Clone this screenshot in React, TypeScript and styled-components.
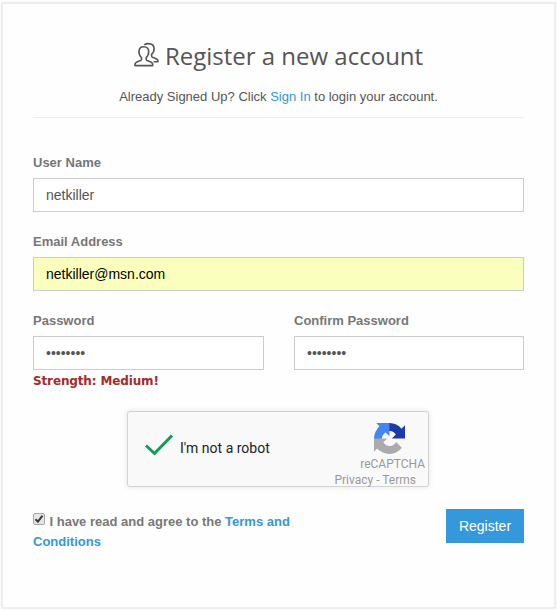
import React from "react";
import styled, { createGlobalStyle } from "styled-components";

const GlobalStyle = createGlobalStyle`
  * { box-sizing: border-box; }
  body {
    margin: 0;
    background: #fff;
    color: #555;
    font: 13px/20px "Liberation Sans", Arial, sans-serif;
  }
`;

const Panel = styled.form`
  width: 555px;
  height: 607px;
  margin: 2px 0 0 1px;
  padding: 30px;
  border: 2px solid #eee;
  background: #fefefe;
  box-shadow: 0 0 2px #f3f3f3;
`;

const Header = styled.header`
  height: 84px;
  border-bottom: 1px solid #eee;
  text-align: center;
`;

const Title = styled.h2`
  display: flex;
  justify-content: center;
  gap: 6px;
  margin: 0;
  padding-top: 5px;
  font: 400 24px/33px "Open Sans", sans-serif;
  color: #555;
`;

const UsersIcon = styled.svg`
  width: 25px;
  height: 25px;
  margin-top: 3px;
  fill: none;
  stroke: #555;
  stroke-width: 1.6;
  stroke-linejoin: round;
`;

const Intro = styled.p`
  margin: 15px 0 0;
`;

const Link = styled.a`
  color: #3498db;
  text-decoration: none;
`;

const Fields = styled.div`
  display: grid;
  grid-template-columns: 231px 230px;
  column-gap: 30px;
  row-gap: 20px;
  margin-top: 35px;
`;

const Field = styled.label<{ $wide?: boolean }>`
  display: block;
  grid-column: ${(p) => (p.$wide ? "1 / -1" : "auto")};
  font-weight: 700;
  color: #777;
`;

const Input = styled.input<{ $filled?: boolean }>`
  display: block;
  width: 100%;
  height: 34px;
  margin-top: 5px;
  padding: 6px 12px;
  border: 1px solid #ccc;
  border-radius: 0;
  outline: none;
  background: ${(p) => (p.$filled ? "#faffbd" : "#fff")};
  color: ${(p) => (p.$filled ? "#000" : "#555")};
  font: 14px/20px "Liberation Sans", Arial, sans-serif;
`;

const Strength = styled.div`
  height: 20px;
  padding-top: 1px;
  color: #a52a2a;
  font: 700 12px/20px "DejaVu Sans", Verdana, sans-serif;
  letter-spacing: -0.14px;
`;

const Captcha = styled.div`
  display: flex;
  width: 302px;
  height: 76px;
  margin: 21px 0 0 94px;
  border: 1px solid #d3d3d3;
  border-radius: 3px;
  background: #f9f9f9;
  box-shadow: 0 0 4px 1px rgba(0, 0, 0, 0.08);
  font-family: Roboto, sans-serif;
`;

const Tick = styled.svg`
  width: 30px;
  height: 24px;
  margin: 21px 0 0 16px;
  fill: none;
  stroke: #0f9d58;
  stroke-width: 3;
`;

const Robot = styled.span`
  width: 150px;
  margin: 26px 0 0 6px;
  font-size: 14px;
  color: #222;
`;

const Brand = styled.div`
  display: flex;
  flex-direction: column;
  flex: 1;
  align-items: flex-end;
  padding: 11px 3px 0 0;
  color: #999;
  font-size: 12px;
  line-height: 16px;
  white-space: nowrap;
`;

const BrandMark = styled.svg`
  flex: none;
  width: 31px;
  height: 31px;
  margin: 0 20px 2px 0;
`;

const Legal = styled.span`
  margin-right: 9px;
`;

const Footer = styled.footer`
  display: flex;
  justify-content: space-between;
  margin-top: 22px;
`;

const Terms = styled.label`
  width: 290px;
  padding-top: 3px;
  font-weight: 700;
  color: #777;
`;

const Check = styled.svg`
  width: 12px;
  height: 12px;
  margin-right: 4.5px;
  vertical-align: 1px;
`;

const Submit = styled.button`
  width: 78px;
  height: 34px;
  padding: 0;
  border: 0;
  background: #3498db;
  color: #fff;
  font: 14px/20px "Liberation Sans", Arial, sans-serif;
`;

export default function App() {
  return (
    <>
      <GlobalStyle />
      <Panel onSubmit={(e) => e.preventDefault()}>
        <Header>
          <Title>
            <UsersIcon viewBox="0 0 25 25">
              <path d="M9.6 4.800C6.600 4.800 5 6.900 5 9.600c0 2.700 1 4.800 2.500 6v1.800C7.500 19.500 1 19.300 1 22.300v1.300h17.700v-1.300c0-3-6.500-2.800-6.500-4.900v-1.800c1.500-1.200 2.500-3.300 2.500-6 0-2.700-1.800-4.800-5.100-4.800z" />
              <path d="M10.300 2.700C11.500 2 12.700 1.600 14.200 1.600c3.800 0 5.900 2.200 5.900 5.200 0 2.600-1 4.400-2.500 5.400v2c0 2 6.300 1.800 6.300 4.400v1.100h-4.400" />
            </UsersIcon>
            Register a new account
          </Title>
          <Intro>
            Already Signed Up? Click <Link>Sign In</Link> to login your account.
          </Intro>
        </Header>
        <Fields>
          <Field $wide>
            User Name
            <Input defaultValue="netkiller" />
          </Field>
          <Field $wide>
            Email Address
            <Input $filled defaultValue="netkiller@msn.com" />
          </Field>
          <Field>
            Password
            <Input type="password" defaultValue="password" />
          </Field>
          <Field>
            Confirm Password
            <Input type="password" defaultValue="password" />
          </Field>
        </Fields>
        <Strength>Strength: Medium!</Strength>
        <Captcha>
          <Tick viewBox="0 0 30 24">
            <path d="M2 12.500l8.500 8L28 2.500" />
          </Tick>
          <Robot>I'm not a robot</Robot>
          <Brand>
            <BrandMark viewBox="0 0 64 64">
              <path fill="#1c3aa9" d="M64 31.955l-.033-1.37V4.687l-7.16 7.16C50.948 4.674 42.033.093 32.050.093c-10.4 0-19.622 4.960-25.458 12.640l11.736 11.860a15.550 15.550 0 0 1 4.754-5.334c2.050-1.600 4.952-2.906 8.968-2.906.485 0 .86.057 1.135.163 4.976.393 9.288 3.140 11.828 7.124l-8.307 8.307L64 31.953z" />
              <path fill="#4285f4" d="M31.862.094l-1.370.033H4.594l7.160 7.160C4.580 13.147 0 22.060 0 32.046c0 10.400 4.960 19.622 12.640 25.458L24.500 45.768a15.550 15.550 0 0 1-5.334-4.754c-1.600-2.050-2.906-4.952-2.906-8.968 0-.485.057-.86.163-1.135.393-4.976 3.140-9.288 7.124-11.828l8.307 8.307L31.860.095z" />
              <path fill="#ababab" d="M0 32.045l.033 1.370v25.898l7.160-7.160c5.860 7.173 14.774 11.754 24.760 11.754 10.400 0 19.622-4.960 25.458-12.640l-11.736-11.860a15.550 15.550 0 0 1-4.754 5.334c-2.050 1.600-4.952 2.906-8.968 2.906-.485 0-.86-.057-1.135-.163-4.976-.393-9.288-3.140-11.828-7.124l8.307-8.307c-10.522.04-22.400.066-27.295-.005z" />
            </BrandMark>
            <span>reCAPTCHA</span>
            <Legal>Privacy - Terms</Legal>
          </Brand>
        </Captcha>
        <Footer>
          <Terms>
            <Check viewBox="0 0 12 12">
              <rect x=".5" y=".5" width="11" height="11" rx="1.500" fill="#e6e6e6" stroke="#a6a6a6" />
              <path d="M2.500 6.200l2.400 2.500 4.600-6" fill="none" stroke="#3c3c3c" strokeWidth="2" />
            </Check>
            I have read and agree to the <Link>Terms and Conditions</Link>
          </Terms>
          <Submit>Register</Submit>
        </Footer>
      </Panel>
    </>
  );
}
